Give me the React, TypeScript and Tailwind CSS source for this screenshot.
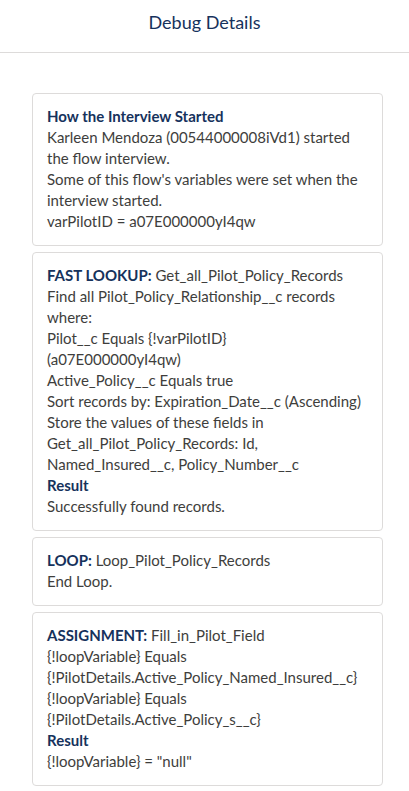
export default function App() {
  return (
    <div className="min-h-screen w-full bg-white text-[15px] leading-[21px] text-[#3e3e3c]" style={{ fontFamily: "Lato, 'Noto Sans', sans-serif" }}>
      <div className="h-[53px] border-b border-[#dddbda] flex items-center justify-center">
        <h1 className="text-[18px] text-[#16325c] -mt-[7px]">Debug Details</h1>
      </div>

      <div className="ml-[32px] mr-[26px] mt-[40px] flex flex-col gap-[6px] whitespace-nowrap">
        <div className="border border-[#dddbda] rounded-[4px] pl-[14px] pr-2 pt-[12px] pb-[13px]">
          <div className="font-bold text-[#16325c]">How the Interview Started</div>
          <div>Karleen Mendoza (00544000008iVd1) started</div>
          <div>the flow interview.</div>
          <div>Some of this flow's variables were set when the</div>
          <div>interview started.</div>
          <div>varPilotID = a07E000000yI4qw</div>
        </div>

        <div className="border border-[#dddbda] rounded-[4px] pl-[14px] pr-2 pt-[12px] pb-[13px]">
          <div><b className="text-[#16325c]">FAST LOOKUP:</b> Get_all_Pilot_Policy_Records</div>
          <div>Find all Pilot_Policy_Relationship__c records</div>
          <div>where:</div>
          <div>Pilot__c Equals {"{!varPilotID}"}</div>
          <div>(a07E000000yI4qw)</div>
          <div>Active_Policy__c Equals true</div>
          <div>Sort records by: Expiration_Date__c (Ascending)</div>
          <div>Store the values of these fields in</div>
          <div>Get_all_Pilot_Policy_Records: Id,</div>
          <div>Named_Insured__c, Policy_Number__c</div>
          <div className="font-bold text-[#16325c]">Result</div>
          <div>Successfully found records.</div>
        </div>

        <div className="border border-[#dddbda] rounded-[4px] pl-[14px] pr-2 pt-[12px] pb-[13px]">
          <div><b className="text-[#16325c]">LOOP:</b> Loop_Pilot_Policy_Records</div>
          <div>End Loop.</div>
        </div>

        <div className="border border-[#dddbda] rounded-[4px] pl-[14px] pr-2 pt-[12px] pb-[13px]">
          <div><b className="text-[#16325c]">ASSIGNMENT:</b> Fill_in_Pilot_Field</div>
          <div>{"{!loopVariable}"} Equals</div>
          <div>{"{!PilotDetails.Active_Policy_Named_Insured__c}"}</div>
          <div>{"{!loopVariable}"} Equals</div>
          <div>{"{!PilotDetails.Active_Policy_s__c}"}</div>
          <div className="font-bold text-[#16325c]">Result</div>
          <div>{'{!loopVariable} = "null"'}</div>
        </div>
      </div>
    </div>
  );
}
